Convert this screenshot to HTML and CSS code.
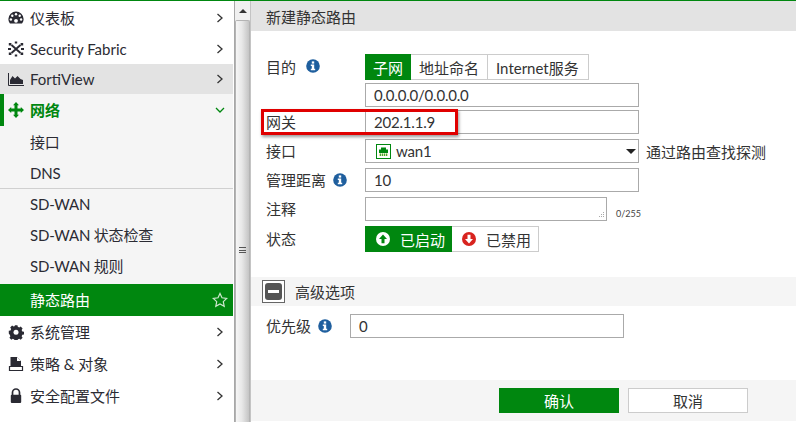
FILE: index.html
```html
<!DOCTYPE html>
<html lang="zh">
<head>
<meta charset="utf-8">
<title>新建静态路由</title>
<link rel="stylesheet" href="styles.css">
</head>
<body>
<div class="app">
  <nav class="sidebar">
    <a class="item"><svg class="ico" viewBox="0 0 16 16"><path d="M8 1.500A7.600 7.600 0 0 0 .4 9c0 1.800.6 3.300 1.600 4.500h12c1-1.200 1.600-2.700 1.600-4.500A7.600 7.600 0 0 0 8 1.500z" fill="#2a2a33"/><circle cx="8" cy="4.200" r="1.200" fill="#fff"/><circle cx="4.300" cy="5.800" r="1.200" fill="#fff"/><circle cx="11.700" cy="5.800" r="1.200" fill="#fff"/><circle cx="2.900" cy="9.500" r="1.200" fill="#fff"/><circle cx="13.100" cy="9.500" r="1.200" fill="#fff"/><circle cx="8" cy="10.800" r="1.900" fill="#fff"/></svg><span class="txt">仪表板</span><svg class="chev" viewBox="0 0 8 10"><path d="M1.500 1l4.500 4-4.500 4" fill="none" stroke="#333" stroke-width="1.300"/></svg></a>
    <a class="item"><svg class="ico" viewBox="0 0 16 16"><path d="M.8 2h2.600v2.600H.8zM12.600 2h2.600v2.600h-2.600zM.8 11.400h2.600V14H.8zM12.600 11.400h2.600V14h-2.600zM6.800 .4h2.400v2.200H6.800zM6.800 13.400h2.400v2.200H6.800zM0 7h3v2H0zM13 7h3v2h-3z" fill="#2a2a33"/><path d="M3.500 4l9 8M12.500 4l-9 8" stroke="#2a2a33" stroke-width="1.900" fill="none"/></svg><span class="txt">Security Fabric</span><svg class="chev" viewBox="0 0 8 10"><path d="M1.500 1l4.500 4-4.500 4" fill="none" stroke="#333" stroke-width="1.300"/></svg></a>
    <a class="item hover"><svg class="ico" viewBox="0 0 16 16"><path d="M.5 2v12.500H16" fill="none" stroke="#2a2a33" stroke-width="1"/><path d="M2 13V9l2.500-4 2.500 2.500L9.500 5l3 3 2.500 1v4z" fill="#2a2a33"/></svg><span class="txt">FortiView</span><svg class="chev" viewBox="0 0 8 10"><path d="M1.500 1l4.500 4-4.500 4" fill="none" stroke="#333" stroke-width="1.300"/></svg></a>
    <a class="item open"><svg class="ico" viewBox="0 0 16 16"><path d="M8 0l3 3.200H9.500V6.500h3.300V5L16 8l-3.200 3V9.500H9.500v3.300H11L8 16l-3-3.200h1.500V9.500H3.200V11L0 8l3.200-3v1.500h3.300V3.200H5z" fill="#00870f"/></svg><span class="txt">网络</span><svg class="chevd" viewBox="0 0 10 8"><path d="M1 2l4 4 4-4" fill="none" stroke="#00870f" stroke-width="1.300"/></svg></a>
    <div class="sub">
      <a class="subitem">接口</a>
      <a class="subitem">DNS</a>
      <div class="divider"></div>
      <a class="subitem lower">SD-WAN</a>
      <a class="subitem lower">SD-WAN 状态检查</a>
      <a class="subitem lower">SD-WAN 规则</a>
    </div>
    <a class="item active"><span class="txt indent">静态路由</span><svg class="star" viewBox="0 0 16 16"><path d="M8 1.500l2 4.300 4.700.6-3.400 3.200.9 4.700L8 12l-4.200 2.300.9-4.700L1.300 6.400 6 5.800z" fill="none" stroke="#cfe8d0" stroke-width="1.200"/></svg></a>
    <a class="item low"><svg class="ico" viewBox="0 0 16 16"><path d="M6.500 1h3l.4 1.800 1.500.7 1.600-1 2 2.100-1 1.500.7 1.600 1.800.4v2.800l-1.800.4-.7 1.600 1 1.500-2 2.100-1.600-1-1.500.7-.4 1.800h-3l-.4-1.800-1.500-.7-1.600 1-2-2.100 1-1.500-.7-1.600L.3 9.900V7.100l1.800-.4.700-1.600-1-1.500 2-2.100 1.600 1 1.500-.7z" transform="translate(.5 .2) scale(.94)" fill="#2a2a33"/><circle cx="8" cy="8.200" r="2.500" fill="#fff"/></svg><span class="txt">系统管理</span><svg class="chev" viewBox="0 0 8 10"><path d="M1.500 1l4.500 4-4.500 4" fill="none" stroke="#333" stroke-width="1.300"/></svg></a>
    <a class="item low"><svg class="ico" viewBox="0 0 16 16"><path d="M2.500 1h6.500l4 4v5H2.500z" fill="#2a2a33"/><path d="M9 1l4 4H9z" fill="#fff"/><path d="M1.500 10.500h13v4h-13z" fill="#fff" stroke="#2a2a33" stroke-width="1.200"/></svg><span class="txt">策略 &amp; 对象</span><svg class="chev" viewBox="0 0 8 10"><path d="M1.500 1l4.500 4-4.500 4" fill="none" stroke="#333" stroke-width="1.300"/></svg></a>
    <a class="item low"><svg class="ico" viewBox="0 0 16 16"><path d="M4.500 7V4.500a3.500 3.500 0 0 1 7 0V7" fill="none" stroke="#2a2a33" stroke-width="1.700"/><rect x="2.800" y="6.800" width="10.400" height="8.200" rx="1" fill="#2a2a33"/></svg><span class="txt">安全配置文件</span><svg class="chev" viewBox="0 0 8 10"><path d="M1.500 1l4.500 4-4.500 4" fill="none" stroke="#333" stroke-width="1.300"/></svg></a>
  </nav>
  <div class="scrollbar">
    <div class="scroll-up"><span class="tri"></span></div>
    <div class="thumb"><span class="grip"></span></div>
  </div>
  <main class="main">
    <header class="title">新建静态路由</header>
    <form class="form">
      <div class="row tabs-row">
        <label class="lab">目的<svg class="info gap" viewBox="0 0 14 14"><circle cx="7" cy="7" r="6.800" fill="#1f5f9e"/><rect x="5.800" y="2.400" width="2.400" height="2.200" fill="#fff"/><path d="M4.800 5.600h3.400v4.200h1v1.400H4.800V9.800h1V7H4.800z" fill="#fff"/></svg></label>
        <div class="seg">
          <span class="seg-btn on">子网</span><span class="seg-btn">地址命名</span><span class="seg-btn">Internet服务</span>
        </div>
      </div>
      <div class="row r-sub"><span class="lab"></span><div class="field">0.0.0.0/0.0.0.0</div></div>
      <div class="row r-gw"><label class="lab">网关</label><div class="field">202.1.1.9</div></div>
      <div class="row r-if">
        <label class="lab">接口</label>
        <div class="field select"><svg class="port" viewBox="0 0 15 15"><rect x=".5" y=".5" width="14" height="14" fill="#fff" stroke="#00870f"/><path d="M3 9V5.500h2V3.500h5v2h2V9z" fill="#00870f"/><path d="M3 9.500h9V12H3z" fill="#d9e8a0"/><path d="M4.500 9.500V12M6.500 9.500V12M8.500 9.500V12M10.500 9.500V12" stroke="#00870f" stroke-width=".7"/></svg><span>wan1</span><span class="caret"></span></div>
        <span class="note">通过路由查找探测</span>
      </div>
      <div class="row r-dist"><label class="lab">管理距离<svg class="info gap2" viewBox="0 0 14 14"><circle cx="7" cy="7" r="6.800" fill="#1f5f9e"/><rect x="5.800" y="2.400" width="2.400" height="2.200" fill="#fff"/><path d="M4.800 5.600h3.400v4.200h1v1.400H4.800V9.800h1V7H4.800z" fill="#fff"/></svg></label><div class="field">10</div></div>
      <div class="row r-com"><label class="lab">注释</label><div class="field area"><svg class="grip-r" viewBox="0 0 8 8"><path d="M6.500 1v1M4.500 3v1M6.500 3v1M2.500 5v1M4.500 5v1M6.500 5v1" stroke="#aaa" stroke-width="1"/></svg></div><span class="count">0/255</span></div>
      <div class="row r-st">
        <label class="lab">状态</label>
        <div class="seg">
          <span class="seg-btn on st"><svg class="st-ico" viewBox="0 0 14 14"><circle cx="7" cy="7" r="7" fill="#fff"/><path d="M7 2.500L11 7H8.500v4.200h-3V7H3z" fill="#00870f"/></svg>已启动</span><span class="seg-btn st off"><svg class="st-ico" viewBox="0 0 14 14"><circle cx="7" cy="7" r="7" fill="#d8231f"/><path d="M7 11.500L3 7h2.500V2.800h3V7H11z" fill="#fff"/></svg>已禁用</span>
        </div>
      </div>
      <div class="adv"><span class="minus"><span class="minus-in"></span></span>高级选项</div>
      <div class="row r-pri"><label class="lab pri">优先级<svg class="info gap2" viewBox="0 0 14 14"><circle cx="7" cy="7" r="6.800" fill="#1f5f9e"/><rect x="5.800" y="2.400" width="2.400" height="2.200" fill="#fff"/><path d="M4.800 5.600h3.400v4.200h1v1.400H4.800V9.800h1V7H4.800z" fill="#fff"/></svg></label><div class="field">0</div></div>
    </form>
    <footer class="foot">
      <button class="btn primary" type="button">确认</button>
      <button class="btn" type="button">取消</button>
    </footer>
    <div class="callout"></div>
  </main>
</div>
</body>
</html>
```
FILE: styles.css
```css
* { box-sizing: border-box; }
html, body { margin: 0; padding: 0; height: 100%; overflow: hidden; background: #fff; }
body { font-family: Lato, "Noto Sans CJK SC", sans-serif; font-size: 15px; color: #2b2b33; }
.app { display: flex; width: 796px; height: 422px; border-top: 1px solid #00870f; overflow: hidden; }

.sidebar { width: 233px; flex: none; padding-top: 1px; background: #fff; }
.item { display: flex; align-items: center; height: 31px; padding-left: 8px; padding-right: 9px; font-size: 15px; color: #2b2b33; }
.item.hover { height: 30px; background: #e3e3e3; }
.item.open { height: 32px; border-left: 4px solid #00870f; padding-left: 4px; background: #f5f5f5; color: #00870f; font-weight: 700; }
.item.active { height: 32px; background: #00870f; color: #fff; padding-right: 5px; }
.item.low { height: 32px; }
.item.active .txt, .item.low .txt, .item.open .txt { padding-bottom: 2px; }
.ico { width: 16px; height: 16px; flex: none; margin-right: 6px; }
.txt { flex: 1; white-space: nowrap; }
.indent { padding-left: 22px; }
.chev { width: 8px; height: 10px; flex: none; }
.chevd { width: 10px; height: 8px; flex: none; margin-right: -1px; }
.star { width: 16px; height: 16px; flex: none; }
.sub { background: #f5f5f5; height: 158px; font-size: 15px; }
.subitem { display: flex; align-items: center; height: 31px; padding-left: 30px; white-space: nowrap; letter-spacing: -.2px; }
.subitem.lower { padding-bottom: 2px; }
.divider { height: 1px; background: #d0d0d0; }

.scrollbar { width: 16px; flex: none; background: #f0f0f0; border-left: 1px solid #a8a8a8; margin-left: 1px; display: flex; flex-direction: column; }
.scroll-up { height: 19px; flex: none; display: flex; align-items: center; justify-content: center; }
.tri { width: 0; height: 0; border-left: 4px solid transparent; border-right: 4px solid transparent; border-bottom: 4px solid #333; }
.thumb { flex: 1; display: flex; justify-content: center; padding-top: 226px; border: 1px solid #b4b4b4; border-bottom: 0; border-radius: 2px 2px 0 0; background: linear-gradient(90deg, #f6f6f6 0%, #e8e8e8 45%, #c4c4c4 100%); }
.grip { width: 7px; height: 8px; background: repeating-linear-gradient(180deg, #555 0 1px, transparent 1px 2.500px); }

.main { position: relative; flex: 1; min-width: 0; display: flex; flex-direction: column; border-left: 1px solid #c4c4c4; padding-bottom: 1px; }
.title { height: 30px; flex: none; background: #e3e3e3; padding-left: 15px; display: flex; align-items: center; font-size: 15px; color: #333; }
.form { flex: 1; padding-top: 23px; display: flex; flex-direction: column; }
.row { display: flex; align-items: center; padding-left: 15px; height: 24px; flex: none; }
.lab { width: 99px; flex: none; display: flex; align-items: center; padding-bottom: 2px; font-size: 15px; color: #333; white-space: nowrap; }
.info { width: 14px; height: 14px; flex: none; }
.gap { margin-left: 10px; }
.gap2 { margin-left: 7px; margin-top: 2px; }
.field { width: 274px; height: 24px; flex: none; border: 1px solid #aaa; background: #fff; padding-left: 8px; display: flex; align-items: center; font-size: 15px; color: #333; letter-spacing: -.2px; }
.seg { display: flex; height: 26px; }
.seg-btn { display: flex; align-items: center; height: 26px; padding: 0 8px; border: 1px solid #ccc; border-left: 0; background: #fff; font-size: 15px; color: #333; white-space: nowrap; }
.seg-btn.on { background: #00870f; color: #fff; border-color: #00870f; padding: 0 7px 0 8px; }
.seg-btn:last-child { padding-right: 9px; }
.seg-btn.on.st { padding: 0 6px 0 11px; }
.seg-btn.off { padding: 0 7px 0 10px; }
.st-ico { width: 14px; height: 14px; flex: none; margin-right: 10px; }
.tabs-row { height: 26px; margin-bottom: 3px; }
.r-gw { margin-top: 3px; }
.r-if { margin-top: 5px; }
.r-dist, .r-com { margin-top: 5px; }
.r-st { margin-top: 5px; height: 26px; }
.select { position: relative; padding-left: 10px; }
.port { width: 15px; height: 15px; margin-right: 5px; flex: none; }
.caret { margin-left: auto; margin-right: 2px; width: 0; height: 0; border-left: 5px solid transparent; border-right: 5px solid transparent; border-top: 5px solid #222; }
.note { margin-left: 7px; font-size: 15px; color: #333; white-space: nowrap; }
.area { width: 242px; justify-content: flex-end; align-items: flex-end; padding: 0 1px 1px 0; }
.grip-r { width: 8px; height: 8px; }
.count { margin-left: 9px; font-size: 9px; color: #444; padding-top: 8px; }
.adv { margin-top: 25px; height: 29px; flex: none; background: #f5f5f5; display: flex; align-items: center; padding-left: 11px; font-size: 15px; color: #333; }
.minus { width: 23px; height: 23px; border: 1px solid #666; margin-right: 10px; display: flex; align-items: center; justify-content: center; background: #fff; }
.minus-in { width: 17px; height: 17px; border-radius: 3px; background: #555; position: relative; display: block; }
.minus-in::after { content: ""; position: absolute; left: 3px; right: 3px; top: 7px; height: 3px; background: #fff; }
.r-pri { margin-top: 8px; }
.lab.pri { width: 84px; }
.foot { height: 41px; flex: none; background: #f5f5f5; display: flex; justify-content: flex-start; align-items: flex-start; padding: 8px 0 0 248px; gap: 9px; }
.btn { width: 120px; height: 25px; border: 1px solid #ccc; background: #fff; font: 15px Lato, "Noto Sans CJK SC", sans-serif; color: #333; padding: 0; }
.primary { background: #00870f; border-color: #00870f; color: #fff; }
.callout { position: absolute; left: 10px; top: 108px; width: 197px; height: 26px; border: 3px solid #e00000; box-shadow: 1px 2px 3px rgba(0,0,0,.4); pointer-events: none; }
```
